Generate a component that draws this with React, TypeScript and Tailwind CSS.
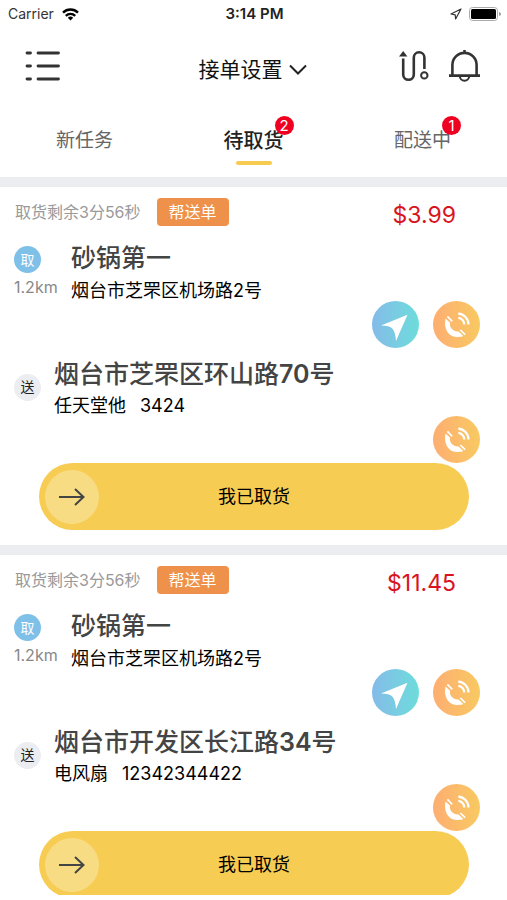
type Order = {
  remain: string
  tag: string
  price: string
  distance: string
  shop: string
  shopAddress: string
  address: [string, string, string]
  customer: string
  phone: string
}

const orders: Order[] = [
  {
    remain: '取货剩余3分56秒',
    tag: '帮送单',
    price: '$3.99',
    distance: '1.2km',
    shop: '砂锅第一',
    shopAddress: '烟台市芝罘区机场路2号',
    address: ['烟台市芝罘区环山路', '70', '号'],
    customer: '任天堂他',
    phone: '3424',
  },
  {
    remain: '取货剩余3分56秒',
    tag: '帮送单',
    price: '$11.45',
    distance: '1.2km',
    shop: '砂锅第一',
    shopAddress: '烟台市芝罘区机场路2号',
    address: ['烟台市开发区长江路', '34', '号'],
    customer: '电风扇',
    phone: '12342344422',
  },
]

const tabs = [
  { name: '新任务', count: 0, active: false },
  { name: '待取货', count: 2, active: true },
  { name: '配送中', count: 1, active: false },
]

const StatusBar = () => {
  return (
    <div className="grid h-7 shrink-0 grid-cols-3 items-center pr-[6px] pl-2 text-sm text-black">
      <div className="flex items-center gap-2 text-[#333]">
        <span>Carrier</span>
        <svg width="17" height="13" viewBox="0 0 17 13" fill="none" stroke="#000" strokeWidth="2.4">
          <path d="M1 4.6a10.8 10.8 0 0 1 15 0" />
          <path d="M3.8 7.8a6.8 6.8 0 0 1 9.4 0" />
          <path d="M8.5 12.4L5.8 9.7a3.9 3.9 0 0 1 5.4 0z" fill="#000" stroke="none" />
        </svg>
      </div>
      <div className="text-center text-[15px] font-semibold text-[#222]">3:14 PM</div>
      <div className="flex items-center justify-end gap-[7px]">
        <svg width="12" height="12" viewBox="0 0 12 12" fill="none" stroke="#333" strokeWidth="1.2" strokeLinejoin="round">
          <path d="M11 1L1 6l4.2.8.4 4.2z" />
        </svg>
        <svg width="32" height="14" viewBox="0 0 32 14">
          <rect x="0.5" y="0.5" width="28" height="13" rx="3" fill="#fff" stroke="#aaa" />
          <rect x="2" y="2" width="25" height="10" rx="1.5" fill="#000" />
          <path d="M30 5v4q2-.5 2-2t-2-2" fill="#999" />
        </svg>
      </div>
    </div>
  )
}

const Header = () => {
  return (
    <header className="grid h-20 shrink-0 grid-cols-[1fr_auto_1fr] items-center pr-[27px] pb-1 pl-[25px]">
      <button aria-label="菜单" className="w-9">
        <svg width="36" height="32" viewBox="0 0 36 32" stroke="#333" strokeWidth="2.8" strokeLinecap="round">
          <path d="M2 3h3.5M13 3h20.5M2 16h3.5M13 16h20.5M2 29h3.5M13 29h20.5" />
        </svg>
      </button>
      <button className="mt-[7px] flex items-center gap-[6px] text-[21px] text-[#111]">
        接单设置
        <svg width="18" height="11" viewBox="0 0 18 11" fill="none" stroke="#222" strokeWidth="2">
          <path d="M1 1.5l8 8 8-8" />
        </svg>
      </button>
      <div className="flex items-center justify-end gap-5">
        <button aria-label="路线">
          <svg width="30" height="32" viewBox="0 0 30 32" fill="none" stroke="#333" strokeWidth="2.6">
            <path d="M4.2 1L0 6.6h8.4z" fill="#333" stroke="none" />
            <path d="M4.2 8.5v16a5.3 5.3 0 0 0 10.6 0V7.6a5.2 5.2 0 0 1 10.6 0V19" />
            <circle cx="25.3" cy="25.4" r="3.2" strokeWidth="2" />
          </svg>
        </button>
        <button aria-label="通知">
          <svg width="31" height="32" viewBox="0 0 31 32" fill="none" stroke="#333" strokeWidth="2.6">
            <path d="M15.5 0v3M0 25.6h31M3.4 25V15a12.1 12.1 0 0 1 24.2 0v10" />
            <path d="M10.8 26a4.7 4.7 0 0 0 9.4 0" strokeWidth="2" />
          </svg>
        </button>
      </div>
    </header>
  )
}

const Tabs = () => {
  return (
    <nav className="grid shrink-0 grid-cols-3">
      {tabs.map((tab) => (
        <button key={tab.name} className="flex flex-col items-center pt-[18px] pb-3">
          <span
            className={
              tab.active
                ? 'relative text-[20px] leading-[30px] font-medium text-[#222]'
                : 'relative text-[19px] leading-[30px] text-[#666]'
            }
          >
            {tab.name}
            {tab.count > 0 && (
              <span className="absolute -top-[10px] -right-[10px] flex h-[19px] w-[19px] items-center justify-center rounded-full bg-[#f00020] text-[15px] font-normal text-white">
                {tab.count}
              </span>
            )}
          </span>
          <span className={tab.active ? 'mt-[5px] h-1 w-9 rounded-xs bg-[#f7cb50]' : 'mt-[5px] h-1 w-9'} />
        </button>
      ))}
    </nav>
  )
}

const NavigateButton = () => {
  return (
    <button aria-label="导航" className="h-[47px] w-[47px] rounded-full bg-linear-to-r from-[#84bbe8] to-[#6cdcdb]">
      <svg width="47" height="47" viewBox="0 0 47 47" fill="#fff">
        <path d="M35.5 13.8L9 24.6q8.5 0 11.5 3.2 2.8 3 3.5 12.2z" />
      </svg>
    </button>
  )
}

const CallButton = () => {
  return (
    <button aria-label="电话" className="h-[47px] w-[47px] rounded-full bg-linear-to-r from-[#fdae72] to-[#f8c961]">
      <svg width="47" height="47" viewBox="0 0 47 47" fill="none" stroke="#fff">
        <path
          d="M12.5 17.4C10.4 27.5 15.5 35.8 23.5 35.9c3 .1 5 0 6.8-.8l-4.8-4.6c-5 .6-9.800-4.300-8.300-8.700z"
          fill="#fff"
          stroke="none"
        />
        <path d="M14.4 15.400l4.800 5M27.400 29l4.700 4.600" strokeWidth="1.700" />
        <path d="M25.300 16.800a6.500 6.500 0 0 1 5.900 6.600M25.300 12.600a11 11 0 0 1 10.200 10.800" strokeWidth="2.200" />
      </svg>
    </button>
  )
}

const OrderCard = ({ order }: { order: Order }) => {
  return (
    <article className="shrink-0 border-t-10 border-[#ecedf0] pt-[11px] pb-[15px]">
      <div className="flex h-7 items-center pr-[51px] pl-[15px]">
        <span className="text-base text-[#999]">{order.remain}</span>
        <span className="ml-4 flex h-7 items-center rounded-sm bg-[#ee914b] px-3 text-base text-white">
          {order.tag}
        </span>
        <span className="mt-[6px] ml-auto text-[23px] text-[#d9141e]">{order.price}</span>
      </div>

      <div className="mt-4 flex pl-[14px]">
        <div className="w-[57px]">
          <div className="mt-1 flex h-[27px] w-[27px] items-center justify-center rounded-full bg-[#7fc0e8] text-sm text-white">
            取
          </div>
          <div className="mt-[2px] text-base leading-6 text-[#888]">{order.distance}</div>
        </div>
        <div>
          <h2 className="text-[25px] leading-8 font-medium text-[#444]">{order.shop}</h2>
          <p className="mt-[7px] text-[18px] leading-5 text-black">{order.shopAddress}</p>
        </div>
      </div>
      <div className="flex justify-end gap-[14px] pr-[27px]">
        <NavigateButton />
        <CallButton />
      </div>

      <div className="mt-[10px] flex items-center pl-[14px]">
        <div className="flex h-[27px] w-[27px] items-center justify-center rounded-full bg-[#ecedf0] text-sm text-[#222]">
          送
        </div>
        <div className="ml-[13px]">
          <h2 className="text-[25px] leading-8 font-medium text-[#444]">
            {order.address[0]}
            <span className="font-semibold">{order.address[1]}</span>
            {order.address[2]}
          </h2>
          <p className="mt-[6px] flex gap-[14px] text-[18px] leading-5 text-black">
            <span>{order.customer}</span>
            <span>{order.phone}</span>
          </p>
        </div>
      </div>
      <div className="flex justify-end pr-[27px]">
        <CallButton />
      </div>

      <div className="pr-[38px] pl-[39px]">
        <button className="relative flex h-[67px] w-full items-center justify-center rounded-full bg-[#f7cc53] text-[18px] text-black">
          <span className="absolute left-[6px] flex h-[54px] w-[54px] items-center justify-center rounded-full bg-[#f8dc84]">
            <svg width="26" height="18" viewBox="0 0 26 18" fill="none" stroke="#444" strokeWidth="2">
              <path d="M0 9h25M16 1l8.5 8L16 17" />
            </svg>
          </span>
          我已取货
        </button>
      </div>
    </article>
  )
}

export default function App() {
  return (
    <div className="flex h-screen flex-col bg-white pb-[5px] font-['Inter','Noto_Sans_CJK_SC',sans-serif]">
      <StatusBar />
      <Header />
      <Tabs />
      <main className="flex min-h-0 flex-1 flex-col overflow-hidden">
        {orders.map((order) => (
          <OrderCard key={order.price} order={order} />
        ))}
      </main>
    </div>
  )
}
